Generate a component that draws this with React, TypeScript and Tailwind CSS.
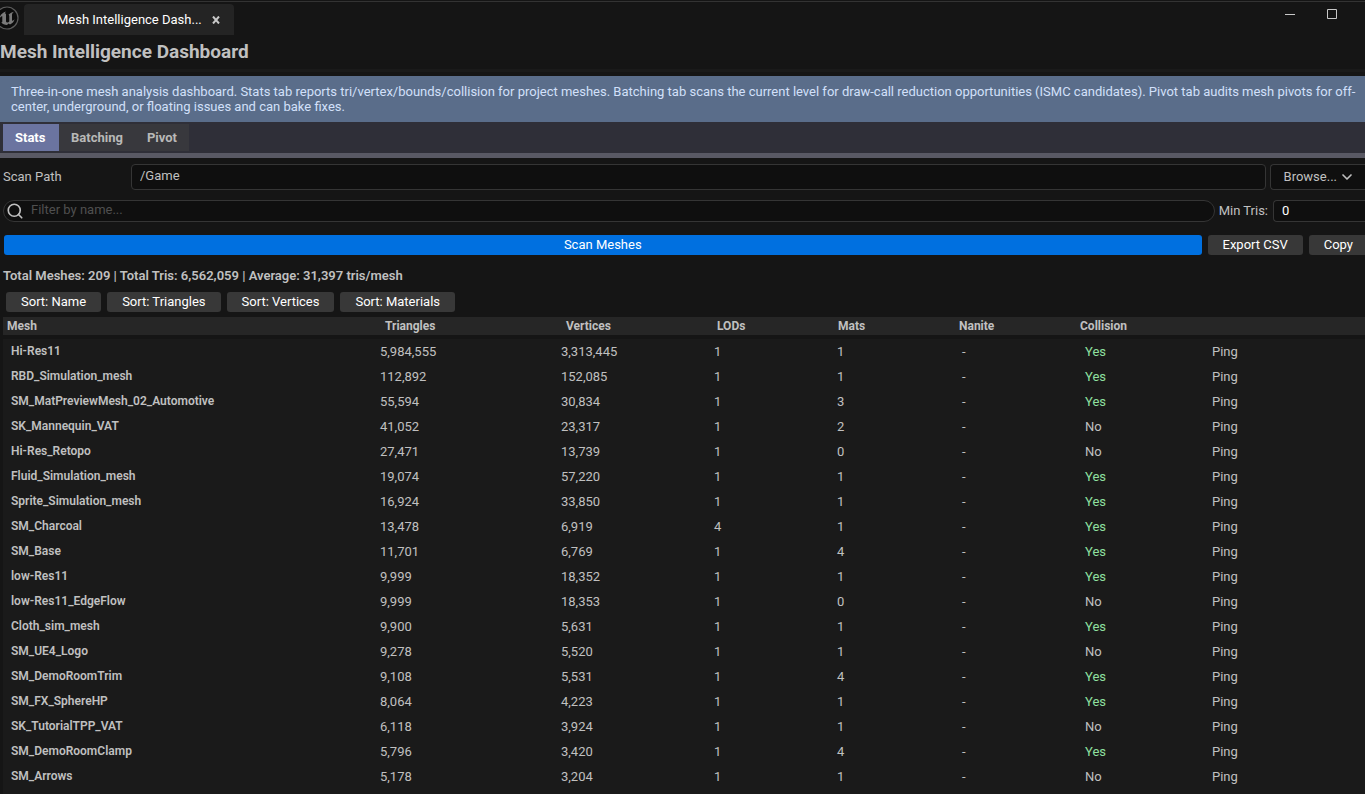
import { ChevronDown, Search } from "lucide-react";

type Mesh = {
  name: string;
  tris: string;
  verts: string;
  lods: number;
  mats: number;
  collision: boolean;
};

const MESHES: Mesh[] = [
  { name: "Hi-Res11", tris: "5,984,555", verts: "3,313,445", lods: 1, mats: 1, collision: true },
  { name: "RBD_Simulation_mesh", tris: "112,892", verts: "152,085", lods: 1, mats: 1, collision: true },
  { name: "SM_MatPreviewMesh_02_Automotive", tris: "55,594", verts: "30,834", lods: 1, mats: 3, collision: true },
  { name: "SK_Mannequin_VAT", tris: "41,052", verts: "23,317", lods: 1, mats: 2, collision: false },
  { name: "Hi-Res_Retopo", tris: "27,471", verts: "13,739", lods: 1, mats: 0, collision: false },
  { name: "Fluid_Simulation_mesh", tris: "19,074", verts: "57,220", lods: 1, mats: 1, collision: true },
  { name: "Sprite_Simulation_mesh", tris: "16,924", verts: "33,850", lods: 1, mats: 1, collision: true },
  { name: "SM_Charcoal", tris: "13,478", verts: "6,919", lods: 4, mats: 1, collision: true },
  { name: "SM_Base", tris: "11,701", verts: "6,769", lods: 1, mats: 4, collision: true },
  { name: "low-Res11", tris: "9,999", verts: "18,352", lods: 1, mats: 1, collision: true },
  { name: "low-Res11_EdgeFlow", tris: "9,999", verts: "18,353", lods: 1, mats: 0, collision: false },
  { name: "Cloth_sim_mesh", tris: "9,900", verts: "5,631", lods: 1, mats: 1, collision: true },
  { name: "SM_UE4_Logo", tris: "9,278", verts: "5,520", lods: 1, mats: 1, collision: false },
  { name: "SM_DemoRoomTrim", tris: "9,108", verts: "5,531", lods: 1, mats: 4, collision: true },
  { name: "SM_FX_SphereHP", tris: "8,064", verts: "4,223", lods: 1, mats: 1, collision: true },
  { name: "SK_TutorialTPP_VAT", tris: "6,118", verts: "3,924", lods: 1, mats: 1, collision: false },
  { name: "SM_DemoRoomClamp", tris: "5,796", verts: "3,420", lods: 1, mats: 4, collision: true },
  { name: "SM_Arrows", tris: "5,178", verts: "3,204", lods: 1, mats: 1, collision: false },
];

const SORTS = ["Name", "Triangles", "Vertices", "Materials"];

const BUTTON = "h-5 rounded-[3px] bg-[#383838] px-[15px] pb-0.5 text-white";

function EngineLogo() {
  return (
    <svg viewBox="0 0 24 24" className="-ml-[5px] h-6 w-6 shrink-0" aria-hidden="true">
      <circle cx="12" cy="12" r="11" fill="#0c0c0c" stroke="#5c5c5c" strokeWidth="1.2" />
      <path
        d="M11 5.5C7.500 6.500 5 9 4.500 12.500C5.500 11 6.500 10.300 7.300 10.300V15.500C7.300 16.300 6.800 16.500 6.200 16.300C7.500 18 9.500 19 12 19L13.500 17.500L15 18.500C17.300 17.500 19 15.500 19.500 13.200C18.600 14.200 17.800 14.700 17 14.700V9C17 7.800 17.800 6.700 19 5.800C17 6.200 15 7.300 13.500 8.800C14 9 14.300 9.500 14.300 10.200V15.500C13.700 16.200 12.900 16.600 12.200 16.500C11.300 16.400 11 15.900 11 15V8.500C11 7.300 10.500 7.500 9.800 7.900C10 7 10.400 6.200 11 5.500Z"
        fill="#7a7a7a"
      />
    </svg>
  );
}

function TitleBar() {
  return (
    <header className="mt-px flex h-9 items-start border-t border-[#333]">
      <div className="flex h-8 items-center">
        <EngineLogo />
      </div>
      <div className="ml-[5px] mt-0.5 flex h-[31px] w-[210px] items-center justify-between rounded-t bg-[#242424] pl-[33px] pr-3.5 text-white">
        <span>Mesh Intelligence Dash...</span>
        <button type="button" aria-label="Close tab" className="text-[#c8c8c8]">
          <svg viewBox="0 0 8 8" className="h-2 w-2" stroke="currentColor" strokeWidth="2">
            <path d="M1 0.500 7 7.500M7 0.500 1 7.500" />
          </svg>
        </button>
      </div>
      <div className="ml-auto flex items-center gap-8 pr-7 pt-[7px] text-[#c8c8c8]">
        <button type="button" aria-label="Minimize">
          <svg viewBox="0 0 10 10" className="h-2.5 w-2.5" fill="none" stroke="currentColor">
            <path d="M0 5.500H10" />
          </svg>
        </button>
        <button type="button" aria-label="Maximize">
          <svg viewBox="0 0 10 10" className="h-2.5 w-2.5" fill="none" stroke="currentColor">
            <path d="M0.500 0.500H9.500V9.500H0.500Z" />
          </svg>
        </button>
      </div>
    </header>
  );
}

function Tabs() {
  return (
    <nav className="flex border-b-5 border-[#595964] bg-[#2f2f38] px-[3px] py-0.5 font-bold text-[#b8b8b8]">
      <button type="button" className="h-[27px] min-w-14 bg-[#6b74a0] px-3 text-left text-white">
        Stats
      </button>
      <button type="button" className="h-[27px] bg-[#38383d] px-3">
        Batching
      </button>
      <button type="button" className="h-[27px] bg-[#38383d] px-3">
        Pivot
      </button>
    </nav>
  );
}

function ScanForm() {
  return (
    <form className="flex flex-col" onSubmit={(e) => e.preventDefault()}>
      <div className="mt-1.5 flex h-[26px] items-center pl-[3px]">
        <label htmlFor="scan-path" className="w-32 shrink-0 pb-0.5">
          Scan Path
        </label>
        <input
          id="scan-path"
          defaultValue="/Game"
          className="h-full min-w-0 flex-1 rounded border border-[#353535] bg-[#0f0f0f] px-2 pb-1"
        />
        <button
          type="button"
          className="ml-1 flex h-full items-center gap-0.5 rounded-l border border-r-0 border-[#353535] bg-[#0f0f0f] pl-[13px] pr-2.5"
        >
          <span className="pb-0.5">Browse...</span>
          <ChevronDown className="h-4 w-4" strokeWidth={2.5} />
        </button>
      </div>

      <div className="mt-2.5 flex h-[22px] items-center pl-[3px]">
        <label className="flex h-full min-w-0 flex-1 items-center gap-[7px] rounded-full border border-[#353535] bg-[#0f0f0f] pl-0.5">
          <Search className="h-[18px] w-[18px] shrink-0" strokeWidth={2.2} />
          <input
            aria-label="Filter by name"
            placeholder="Filter by name..."
            className="min-w-0 flex-1 bg-transparent pb-1 outline-none placeholder:text-[#4f4f4f]"
          />
        </label>
        <label htmlFor="min-tris" className="ml-1 mr-[5px] pb-0.5">
          Min Tris:
        </label>
        <input
          id="min-tris"
          defaultValue="0"
          className="h-full w-[92px] rounded-l border border-r-0 border-[#353535] bg-[#0f0f0f] px-2 pb-0.5 text-white"
        />
      </div>

      <div className="mt-[13px] flex gap-1.5 pl-1">
        <button type="submit" className="h-5 flex-1 rounded-[3px] bg-[#0070e0] pb-0.5 text-white">
          Scan Meshes
        </button>
        <button type="button" className={BUTTON}>
          Export CSV
        </button>
        <button type="button" className="h-5 rounded-l-[3px] bg-[#383838] pb-0.5 pl-[15px] pr-3 text-white">
          Copy
        </button>
      </div>
    </form>
  );
}

function MeshTable() {
  return (
    <div className="ml-[3px] mt-[5px] flex-1 bg-[#1a1a1a]">
      <table className="w-full table-fixed border-separate border-spacing-0 text-left">
        <thead>
          <tr className="h-[22px] bg-[#151515] text-xs [&>th]:border-b-4 [&>th]:border-[#151515] [&>th]:bg-[#262626] [&>th]:p-0 [&>th]:pb-px">
            <th>
              <span className="pl-1">Mesh</span>
            </th>
            <th className="w-[181px]">
              <span className="pl-[5px]">Triangles</span>
            </th>
            <th className="w-[151px]">
              <span className="pl-[5px]">Vertices</span>
            </th>
            <th className="w-[121px]">
              <span className="pl-[5px]">LODs</span>
            </th>
            <th className="w-[121px]">
              <span className="pl-[5px]">Mats</span>
            </th>
            <th className="w-[121px]">
              <span className="pl-[5px]">Nanite</span>
            </th>
            <th className="w-[132px]">
              <span className="pl-[5px]">Collision</span>
            </th>
            <th className="w-[158px]" aria-label="Actions" />
          </tr>
        </thead>
        <tbody>
          {MESHES.map((mesh) => (
            <tr key={mesh.name} className="h-[25px] [&>td]:p-0">
              <th className="p-0 pb-0.5 pl-2 text-xs font-semibold">{mesh.name}</th>
              <td>{mesh.tris}</td>
              <td>{mesh.verts}</td>
              <td>
                <span className="pl-0.5">{mesh.lods}</span>
              </td>
              <td>
                <span className="pl-1">{mesh.mats}</span>
              </td>
              <td>
                <span className="pl-2">-</span>
              </td>
              <td>
                <span className={mesh.collision ? "pl-2.5 text-[#8fe0a0]" : "pl-2.5"}>
                  {mesh.collision ? "Yes" : "No"}
                </span>
              </td>
              <td>
                <button type="button" className="pl-[5px]">
                  Ping
                </button>
              </td>
            </tr>
          ))}
        </tbody>
      </table>
    </div>
  );
}

export default function App() {
  return (
    <div className="flex min-h-screen flex-col overflow-hidden bg-[#151515] font-[Roboto,sans-serif] text-[13px] leading-[15px] text-[#c0c0c0]">
      <TitleBar />
      <h1 className="border-b-3 border-[#1a1a1a] pb-[5px] pt-[3px] text-[19px] font-bold leading-6">
        Mesh Intelligence Dashboard
      </h1>
      <p className="mt-1 bg-[#5a6d8a] py-2 pl-[11px] pr-1 text-[#d2e0fa]">
        Three-in-one mesh analysis dashboard. Stats tab reports tri/vertex/bounds/collision for
        project meshes. Batching tab scans the current level for draw-call reduction opportunities
        (ISMC candidates). Pivot tab audits mesh pivots for off-center, underground, or floating
        issues and can bake fixes.
      </p>
      <Tabs />
      <ScanForm />
      <p className="mt-[13px] pl-[3px] font-semibold">
        Total Meshes: 209 | Total Tris: 6,562,059 | Average: 31,397 tris/mesh
      </p>
      <div className="mt-[9px] flex gap-1.5 pl-1.5">
        {SORTS.map((sort) => (
          <button key={sort} type="button" className={BUTTON}>
            Sort: {sort}
          </button>
        ))}
      </div>
      <MeshTable />
    </div>
  );
}
